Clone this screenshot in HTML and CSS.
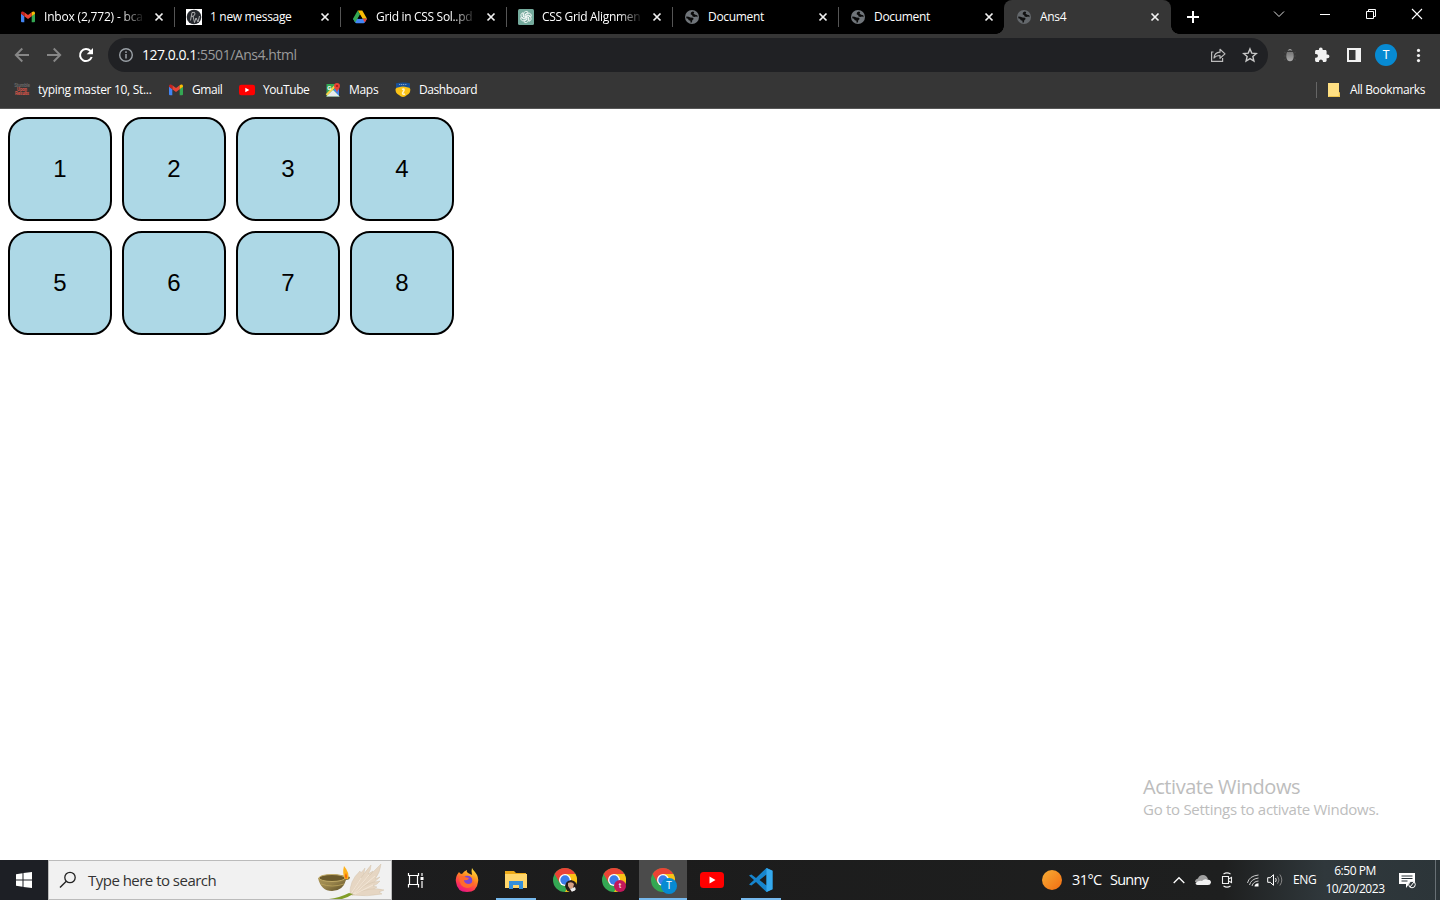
FILE: index.html
```html
<!DOCTYPE html>
<html lang="en">
<head>
<meta charset="utf-8">
<title>Ans4</title>
<link rel="stylesheet" href="styles.css">
</head>
<body>
<svg class="defs" width="0" height="0" aria-hidden="true">
  <defs>
    <linearGradient id="sunFill" x1="0" y1="0" x2="1" y2="1"><stop offset="0" stop-color="#f6ad35"/><stop offset="1" stop-color="#f36d12"/></linearGradient>
    <linearGradient id="foxFill" x1=".8" y1="0" x2=".3" y2="1"><stop offset="0" stop-color="#ffe83d"/><stop offset=".4" stop-color="#ff8a1f"/><stop offset=".75" stop-color="#ff3750"/><stop offset="1" stop-color="#e31587"/></linearGradient>
    <linearGradient id="bowlFill" x1="0" y1="0" x2="1" y2="1"><stop offset="0" stop-color="#b39d5c"/><stop offset=".5" stop-color="#96824a"/><stop offset="1" stop-color="#4f421d"/></linearGradient>
    <linearGradient id="bugFill" x1="0" y1="0" x2="0" y2="1"><stop offset="0" stop-color="#777"/><stop offset="1" stop-color="#aaa"/></linearGradient>
    <symbol id="gmail" viewBox="0 0 16 16"><path fill="#4285f4" d="M1 4.500 4.300 7v6.200H2a1 1 0 0 1-1-1z"/><path fill="#34a853" d="M15 4.500 11.700 7v6.200H14a1 1 0 0 0 1-1z"/><path fill="#ea4335" d="M4.300 3.200 8 6l3.700-2.800V7.200L8 10 4.300 7.200z"/><path fill="#c5221f" d="M1 4.300c0-1.800 1.700-2.300 3.300-1.100v4L1 4.800z"/><path fill="#fbbc04" d="M15 4.300c0-1.800-1.700-2.300-3.300-1.100v4L15 4.800z"/></symbol>
    <symbol id="close" viewBox="0 0 10 10"><path d="M1.500 1.500 8.500 8.500M8.500 1.500 1.500 8.500" fill="none" stroke="#f1f1f1" stroke-width="1.700"/></symbol>
    <symbol id="globe" viewBox="0 0 16 16"><circle cx="8" cy="8" r="7" fill="#70757a"/><path class="land" d="M8.600 2.600 7 3.400 6.600 5.300 8.300 6.200 8.300 7.300 10.200 7.900 12.200 7.600 13.600 8.300 13.300 6.300 11.300 5.800 9.600 4.700 10.200 3zM2.300 7.500 4.500 7.700 6.500 8.400 9 8.800 9.700 10 8.300 11.300 7.900 13.600 6.400 13.500 6.500 11.700 4.800 11.300 3.900 9.800 2.300 9.300z"/></symbol>
    <symbol id="youtube" viewBox="0 0 24 18"><rect x="0" y="1" width="24" height="16" rx="3.500" fill="#f00"/><path d="M9.500 5.500v7l6-3.500z" fill="#fff"/></symbol>
    <symbol id="chrome" viewBox="0 0 24 24"><circle cx="12" cy="12" r="12" fill="#34a853"/><path d="M1.600 6A12 12 0 0 1 22.400 6L12 12z" fill="#ea4335"/><path d="M1.600 6 6.800 15 12 12 12 6z" fill="#ea4335"/><path d="M22.400 6A12 12 0 0 1 12 24L17.200 15 12 6z" fill="#fbc116"/><circle cx="12" cy="12" r="6" fill="#fff"/><circle cx="12" cy="12" r="4.700" fill="#3b7de9"/></symbol>
  </defs>
</svg>

<header class="browser">
  <div class="tabstrip">
    <div class="tab"><svg class="fav"><use href="#gmail"/></svg><span class="tab-title fade w-inbox">Inbox (2,772) - bca</span><svg class="x"><use href="#close"/></svg></div>
    <div class="tab"><svg class="fav" viewBox="0 0 16 16"><rect width="16" height="16" fill="#fff"/><circle cx="8" cy="8" r="7.300" fill="#25282d"/><path d="M4.500 11.500 6 3.500q3.500-1 3 1.500T5.500 7.500M7 7l1.500 6.500L10 9l2 4 1.500-6" fill="none" stroke="#ccc" stroke-width=".8"/></svg><span class="tab-title">1 new message</span><svg class="x"><use href="#close"/></svg></div>
    <div class="tab"><svg class="fav" viewBox="0 0 16 16"><path fill="#fbbc04" d="M5.700 1.500h4.600L15 9.700h-4.400z"/><path fill="#4285f4" d="M1 9.700h14L12.800 13.500q-.4.800-1.300.800H4.500q-.9 0-1.300-.8z"/><path fill="#34a853" d="M5.700 1.500 8 5.500 3.200 13.500 1 9.700z"/><path fill="#ea4335" d="M10.700 9.700H15l-2.200 3.800z"/><path fill="#000" d="m8 6 2.200 3.700H5.800z"/></svg><span class="tab-title fade">Grid in CSS Sol..pd</span><svg class="x"><use href="#close"/></svg></div>
    <div class="tab"><svg class="fav" viewBox="0 0 16 16"><rect width="16" height="16" rx="1.500" fill="#74aa9c"/><g fill="none" stroke="#fff" stroke-width=".8"><path id="petal" d="M5.700 8V4.700a2.500 2.500 0 0 1 4.500-1.300L7.200 5.200v3.400"/><use href="#petal" transform="rotate(60 8 8)"/><use href="#petal" transform="rotate(120 8 8)"/><use href="#petal" transform="rotate(180 8 8)"/><use href="#petal" transform="rotate(240 8 8)"/><use href="#petal" transform="rotate(300 8 8)"/></g></svg><span class="tab-title fade">CSS Grid Alignmen</span><svg class="x"><use href="#close"/></svg></div>
    <div class="tab"><svg class="fav"><use href="#globe"/></svg><span class="tab-title">Document</span><svg class="x"><use href="#close"/></svg></div>
    <div class="tab before-active"><svg class="fav"><use href="#globe"/></svg><span class="tab-title">Document</span><svg class="x"><use href="#close"/></svg></div>
    <div class="tab active"><svg class="fav"><use href="#globe"/></svg><span class="tab-title">Ans4</span><svg class="x"><use href="#close"/></svg></div>
    <svg class="newtab" viewBox="0 0 12 12"><path d="M6 0v12M0 6h12" stroke="#fff" stroke-width="2"/></svg>
    <div class="window-controls">
      <svg viewBox="0 0 12 12"><path d="M1 3.500 6 8.500 11 3.500" fill="none" stroke="#ddd"/></svg>
      <svg viewBox="0 0 12 12"><path d="M1 6.500h10" stroke="#fff"/></svg>
      <svg viewBox="0 0 12 12"><path d="M1.500 3.500h7v7h-7zM3.500 3.500v-2h7v7h-2" fill="none" stroke="#fff"/></svg>
      <svg viewBox="0 0 12 12"><path d="m1 1 10 10M11 1 1 11" stroke="#fff" stroke-width="1.100"/></svg>
    </div>
  </div>

  <div class="toolbar">
    <div class="nav">
      <svg viewBox="0 0 16 16"><path d="M15 8H2M8.300 1.500 1.800 8l6.500 6.500" fill="none" stroke="#878787" stroke-width="1.900"/></svg>
      <svg viewBox="0 0 16 16"><path d="M1 8h13M7.700 1.500 14.200 8l-6.500 6.500" fill="none" stroke="#878787" stroke-width="1.900"/></svg>
      <svg viewBox="0 0 16 16"><path d="M13.700 10A6 6 0 1 1 12.500 4" fill="none" stroke="#fff" stroke-width="2"/><path d="M15 1v6.300H8.700z" fill="#fff"/></svg>
    </div>
    <div class="omnibox">
      <svg class="info" viewBox="0 0 16 16"><circle cx="8" cy="8" r="6.300" fill="none" stroke="#9aa0a6" stroke-width="1.400"/><path d="M8 7v4.500M8 4.300v1.600" stroke="#9aa0a6" stroke-width="1.500"/></svg>
      <span class="url"><b>127.0.0.1</b>:5501/Ans4.html</span>
      <svg class="share" viewBox="0 0 16 16"><path d="M3.500 5H1.600v9.300h11V11" fill="none" stroke="#bbb" stroke-width="1.200"/><path d="M4 11c.3-4 2.500-5.700 6-5.800V2.300L15 6.900l-5 4.400V8.500C7.500 8.500 5.500 9 4 11z" fill="none" stroke="#bbb" stroke-width="1.200" stroke-linejoin="round"/></svg>
      <svg class="star" viewBox="0 0 16 16"><path d="m8 1.900 1.750 4.200 4.600.4-3.500 3 1.050 4.500L8 11.600 4.100 14l1.050-4.500-3.500-3 4.600-.4z" fill="none" stroke="#c9c9c9" stroke-width="1.400"/></svg>
    </div>
    <div class="extensions">
      <svg viewBox="0 0 16 16"><path d="M5.500 3.700Q8 .3 10.500 3.700 8 2.800 5.500 3.700z" fill="#aaa"/><path d="M5 5h6q1 2 .7 5c-.3 2.800-1.700 4.300-3.700 4.300S4.600 12.800 4.300 10Q4 7 5 5z" fill="url(#bugFill)"/><path d="m2 5 2 1M1.800 9H4M2 13l2-1M14 5l-2 1M14.200 9H12M14 13l-2-1" stroke="#444"/></svg>
      <svg viewBox="0 0 16 16"><path d="M13.600 7.500h-1V4.400c0-.8-.6-1.400-1.400-1.400H8.700V2.500a1.900 1.900 0 0 0-3.800 0V3H2.500c-.8 0-1.400.6-1.400 1.400v2.500h.9a1.900 1.900 0 0 1 0 3.900h-.9v2.700c0 .8.600 1.400 1.400 1.400H5v-.8a2 2 0 0 1 3.900 0v.8h2.300c.8 0 1.400-.6 1.400-1.400v-2.300h1a1.850 1.850 0 0 0 0-3.700z" fill="#f2f2f2"/></svg>
      <svg viewBox="0 0 16 16"><path fill-rule="evenodd" d="M1 1h14v14H1zM3 3v10h6.500V3z" fill="#f2f2f2"/></svg>
      <span class="avatar">T</span>
      <svg viewBox="0 0 16 16" fill="#f2f2f2"><circle cx="8.500" cy="3.400" r="1.600"/><circle cx="8.500" cy="8.500" r="1.600"/><circle cx="8.500" cy="13.600" r="1.600"/></svg>
    </div>
  </div>

  <nav class="bookmarks">
    <a class="bm bm-typing"><span class="mini"><i>Stumble</i><em>Upon</em><em>Results</em></span><span>typing master 10, St...</span></a>
    <a class="bm bm-gmail"><svg class="fav"><use href="#gmail"/></svg><span>Gmail</span></a>
    <a class="bm bm-yt"><svg class="fav"><use href="#youtube"/></svg><span>YouTube</span></a>
    <a class="bm bm-maps"><svg class="fav" viewBox="0 0 16 16"><path d="M1.500 2h12.500v12.500H1.500z" fill="#34a853"/><path d="m2 14.500 6-6 6 6z" fill="#e8eaed"/><path d="m8.500 8 3-3 2.500 3v6z" fill="#4285f4"/><path d="m1.500 13 8.500-9" stroke="#fbd34b" stroke-width="2"/><path d="m2 14.500 6-6 6 6" fill="none" stroke="#fff"/><text x="2.200" y="7.500" font-size="6" fill="#fff" class="map-letter">G</text><path d="M12 10.500C11.600 8 9 6.700 9 4a3 3 0 0 1 6 0c0 2.700-2.600 4-3 6.500z" fill="#ea4335"/><circle cx="12" cy="4" r="1.100" fill="#9d2119"/></svg><span>Maps</span></a>
    <a class="bm"><svg class="fav" viewBox="0 0 16 16"><path d="M1 1.200Q8-.4 15 1.200v5H1z" fill="#174f98"/><path d="M4 2.500h8" stroke="#7f9fc8" stroke-width="1.200" stroke-dasharray="1.200 .7"/><path d="M.5 7Q1 5.500 4 5.300 8 3.500 12 5.300q3 .2 3.300 1.700.3 4.500-3.300 6-2 2-4 2t-4-2Q.3 11.500.5 7z" fill="#fbc316"/><path d="M7 7.500Q9.500 6 9 8.500L7.500 11q.5 2 2.500.8" fill="none" stroke="#fff4c7" stroke-width="1.500"/></svg><span>Dashboard</span></a>
    <a class="bm bm-all"><svg class="fav" viewBox="0 0 16 16"><path d="M2 1h11v9.500h1V15H2z" fill="#ffe083"/><path d="M2.500 14.500h9.500M13.300 10.500v4M13.500 11v3.500H11" fill="none" stroke="#edc44d"/></svg><span>All Bookmarks</span></a>
  </nav>
</header>

<main class="page">
  <div class="grid">
    <div class="cell">1</div><div class="cell">2</div><div class="cell">3</div><div class="cell">4</div>
    <div class="cell">5</div><div class="cell">6</div><div class="cell">7</div><div class="cell">8</div>
  </div>
  <aside class="watermark"><p class="wm-title">Activate Windows</p><p class="wm-sub">Go to Settings to activate Windows.</p></aside>
</main>

<footer class="taskbar">
  <div class="start"><svg width="16" height="16" viewBox="0 0 16 16" fill="#fff"><path d="M0 2.200 6.500 1.200v6.300H0zM7.500 1 16 0v7.500H7.500zM0 8.500h6.500v6.300L0 13.800zM7.500 8.500H16V16l-8.500-1z"/></svg></div>
  <div class="search">
    <svg width="18" height="18" viewBox="0 0 18 18"><circle cx="11" cy="6.500" r="5.200" fill="none" stroke="#222" stroke-width="1.300"/><path d="M7.300 10.200 1 16.500" stroke="#222" stroke-width="1.400"/></svg>
    <span class="search-text">Type here to search</span>
    <svg class="lamp" width="74" height="38" viewBox="0 0 74 38">
      <g fill="#e6d6c3" stroke="#d0bda5" stroke-width=".4"><path d="M33 34Q32 20 43 10q0 4 5-3-1 12-14 27z"/><path d="M34 34Q42 17 54 4q0 5-3 9l5-3Q51 24 35 34z"/><path d="M35 34Q49 17 64 3q-1 9-6 15l5-2Q52 27 35 34z"/><path d="M35 34q14-13 28-14-3 4-7 5l4 1q-9 7-25 8z"/><path d="M35 34q18-9 32-5l-5 2 3 2q-15 3-30 1z"/></g>
      <path d="M34 33 44 17M36 33 52 14M37 33 58 15M38 33l18-9" stroke="#f6eadb" stroke-width=".8"/>
      <path d="M12 38q10-1 20-6l4 1q-6 4-11 5z" fill="#809d28"/>
      <path d="M1 17q14-6 28-2l4 1q0 3-4 3-3 11-14 11T1 17z" fill="url(#bowlFill)"/><ellipse cx="15" cy="17" rx="13" ry="3.500" fill="#6b5a2c" stroke="#c0aa67"/><path d="M4 23q11 4 23 0" fill="none" stroke="#bca65d" stroke-width=".8"/><path d="M27 5q6 7 4 13h-3q-3-5-1-13z" fill="#ffb21b"/><path d="M29 12q2 4 0 6-2-3 0-6z" fill="#f46a0b"/>
    </svg>
  </div>
  <div class="task"><svg width="18" height="18" viewBox="0 0 18 18"><path d="M1.500 2v2.500h10V2M1.500 16.500v-3h10v3M2.500 4.500v9M10.500 4.500v9M15 2v3M15 10v7" fill="none" stroke="#fff" stroke-width="1.200"/><path d="M13.500 6h3v3h-3z" fill="#fff"/></svg></div>
  <div class="apps">
    <div class="app"><svg width="24" height="24" viewBox="0 0 24 24"><path d="M4 4q1 2 3 2 2-3 5-4-1 2 1 3l4 2q-1-4 0-7 1 2 3 4 4 5 3 10-1 10-11 10T1 14Q0 9 4 4z" fill="url(#foxFill)"/><circle cx="12.500" cy="12.500" r="4.800" fill="#7946d8"/><path d="M4 9q3-2 6 0l4 1q-1 3-5 2 0 3 4 4 4 0 6-4 0 8-7 8-8-1-8-11z" fill="#ff6a2c"/></svg></div>
    <div class="app running"><svg width="24" height="20" viewBox="0 0 24 20"><path d="M1 1h9l2 2h10v15H1z" fill="#edaa19"/><path d="M1 4h22v14H1z" fill="#ffd66b"/><path d="M5 19v-8h14v8h-4v-4H9v4z" fill="#348fda"/></svg></div>
    <div class="app"><svg width="24" height="24"><use href="#chrome"/></svg><svg class="badge" viewBox="0 0 12 12"><circle cx="6" cy="6" r="6" fill="#251b19"/><path d="M3 3q4-2 6 1l-1 4-3 1-2-3z" fill="#d6a083"/><path d="M5 9l5-2 1 3-4 2z" fill="#eee"/></svg></div>
    <div class="app"><svg width="24" height="24"><use href="#chrome"/></svg><span class="badge pink">t</span></div>
    <div class="app running selected"><svg width="24" height="24"><use href="#chrome"/></svg><span class="badge blue">T</span></div>
    <div class="app"><svg width="24" height="18"><use href="#youtube"/></svg></div>
    <div class="app running"><svg width="24" height="24" viewBox="0 0 24 24"><path d="m17.500 0 6 2.800v18.400l-6 2.800L7 14.100l-4.600 3.500L0 16.400 5 12 0 7.600l2.400-1.200L7 9.900zM17.500 6.500 10.500 12l7 5.500z" fill="#1685ce" fill-rule="evenodd"/><path d="m17.500 0 6 2.800v18.400l-6 2.800z" fill="#35a9ee"/></svg></div>
  </div>
  <div class="tray">
    <svg class="sun" viewBox="0 0 20 20"><circle cx="10" cy="10" r="10" fill="url(#sunFill)"/></svg>
    <span class="temp">31°C</span><span class="sunny">Sunny</span>
    <svg class="chev" viewBox="0 0 12 8"><path d="m.7 7 5.300-5.300L11.300 7" fill="none" stroke="#fff" stroke-width="1.300"/></svg>
    <svg class="cloud" viewBox="0 0 16 12"><path d="M0 8Q0 5 3 4.500 4 1 8 1q3.500 0 5 4l-4 4z" fill="#a0a0a0"/><path d="M2.500 11Q.5 11 .5 9 4 6 7 7q2-2.500 5-1.500Q16 5.500 16 8.500 15.500 11 13 11z" fill="#f2f2f2"/></svg>
    <svg class="meet" viewBox="0 0 12 16"><path d="M1.500 4.500h6v7h-6zM7.500 7l3-1.500v5L7.500 9M2.500 2Q6-.2 9.500 2M2.500 14q3.500 2.200 7 0" fill="none" stroke="#eee" stroke-width="1.100"/></svg>
    <svg class="wifi" viewBox="0 0 14 14"><path d="M1.500 10Q3 3 12.500 2M3.500 12Q5 6 12.500 5M6 13Q7 8.500 12.500 8" fill="none" stroke="#ccc"/><path d="M8.500 13.500q0-3 4-3.200v3.200z" fill="#fff"/></svg>
    <svg class="sound" viewBox="0 0 16 14"><path d="M.7 4.700h2.500l3.300-3v10.600l-3.300-3H.7z" fill="none" stroke="#fff"/><path d="M8.500 5q1.500 2 0 4" fill="none" stroke="#eee"/><path d="M10.500 3.300q3 3.700 0 7.400M12.800 1.500q4 5.500 0 11" fill="none" stroke="#888"/></svg>
    <span class="eng">ENG</span>
    <div class="clock"><span>6:50 PM</span><span>10/20/2023</span></div>
    <svg class="notice" viewBox="0 0 17 17"><path d="M0 1h16v11h-6l-3 4v-4H0z" fill="#fff"/><path d="M2.500 4h11M2.500 6.500h11M2.500 9h6" stroke="#263036"/><circle cx="13" cy="12.500" r="3.300" fill="#30383c" stroke="#fff"/><path d="m11 15 4-5" stroke="#fff"/></svg>
  </div>
</footer>
</body>
</html>
```
FILE: styles.css
```css
* { box-sizing: border-box; }
html, body { height: 100%; }
body { margin: 0; overflow: hidden; display: flex; flex-direction: column; font-family: "Open Sans", "Noto Sans", sans-serif; font-size: 12px; color: #fff; background: #fff; }
svg { display: block; flex: none; }
span { white-space: nowrap; }
.defs { position: absolute; }
.browser { flex: none; height: 109px; background: #363636; border-bottom: 1px solid #575757; }

.tabstrip { height: 34px; background: #000; display: flex; padding-left: 8px; align-items: center; }
.tab { width: 166px; height: 34px; display: flex; align-items: center; padding: 0 10px 0 12px; position: relative; }
.tab::after { content: ""; position: absolute; right: -1px; top: 7px; width: 1px; height: 20px; background: #555; }
.tab.before-active::after, .tab.active::after { display: none; }
.tab.active { width: 167px; padding-right: 11px; background: #363636; border-radius: 8px 8px 0 0; }
.tab.active::before { content: ""; position: absolute; left: -8px; right: -8px; bottom: 0; height: 8px; background: radial-gradient(circle at 0 0, transparent 7.5px, #363636 8px) left / 8px 8px no-repeat, radial-gradient(circle at 100% 0, transparent 7.5px, #363636 8px) right / 8px 8px no-repeat; }
.fav { width: 16px; height: 16px; }
.land { fill: #080808; }
.active .land { fill: #363636; }
.active .fav { opacity: .8; }
.tab-title { margin-left: 8px; width: 98px; overflow: hidden; line-height: 20px; letter-spacing: -.32px; }
.w-inbox { letter-spacing: -.18px; }
.fade { -webkit-mask-image: linear-gradient(90deg, #000 76px, transparent 101px); mask-image: linear-gradient(90deg, #000 76px, transparent 101px); }
.x { width: 10px; height: 10px; margin-left: auto; }
.newtab { width: 12px; height: 12px; margin-left: 16px; }
.window-controls { display: flex; margin-left: auto; gap: 34px; padding-right: 17px; align-self: flex-start; padding-top: 8px; }
.window-controls svg { width: 12px; height: 12px; }

.toolbar { height: 38px; display: flex; align-items: center; padding-top: 4px; }
.nav { width: 108px; padding-left: 14px; display: flex; gap: 16px; }
.nav svg { width: 16px; height: 16px; }
.omnibox { width: 1160px; height: 34px; border-radius: 17px; background: #202124; display: flex; align-items: center; padding: 0 10px; }
.info { width: 16px; height: 16px; }
.url { margin-left: 8px; font-size: 14px; letter-spacing: -.47px; line-height: 18px; padding-bottom: 1px; color: #9a9a9a; }
.url b { font-weight: 400; color: #fff; }
.share { width: 16px; height: 16px; margin-left: auto; }
.star { width: 16px; height: 16px; margin-left: 16px; }
.extensions { display: flex; align-items: center; padding-left: 14px; gap: 16px; }
.extensions svg { width: 16px; height: 16px; }
.avatar { width: 22px; height: 22px; margin: 0 -3px; border-radius: 50%; background: #078ad2; text-align: center; line-height: 22px; font-family: Roboto, sans-serif; font-size: 12px; }

.bookmarks { height: 36px; display: flex; align-items: center; padding-left: 14px; }
.bm { display: flex; align-items: center; gap: 8px; line-height: 20px; letter-spacing: -.42px; }
.bm-typing { width: 154px; letter-spacing: -.3px; }
.bm-gmail { width: 71px; }
.bm-yt { width: 86px; }
.bm-maps { width: 70px; letter-spacing: -.3px; }
.bm-all { margin-left: auto; width: 124px; padding-left: 9px; border-left: 1px solid #666; height: 16px; letter-spacing: -.38px; }
.mini { width: 16px; font: bold 4.500px/4px Roboto, sans-serif; color: #d8574a; display: flex; flex-direction: column; align-items: center; letter-spacing: -.2px; }
.mini i { font-style: normal; color: #666; }
.mini em { font-style: normal; }
.map-letter { font-family: Roboto, sans-serif; font-weight: bold; }

.page { flex: 1; padding: 8px; position: relative; color: #000; }
.grid { display: grid; grid-template-columns: repeat(4, 104px); gap: 10px; }
.cell { height: 104px; border: 2px solid #000; border-radius: 20px; background: #add8e6; display: flex; align-items: center; justify-content: center; font: 24px "Liberation Sans", Arial, sans-serif; }
.watermark { position: absolute; left: 1143px; top: 664px; color: #bdbdbd; white-space: nowrap; }
.watermark p { margin: 0; }
.wm-title { font-size: 20px; line-height: 27px; letter-spacing: -.44px; }
.wm-sub { font-size: 15px; line-height: 19px; letter-spacing: -.28px; }

.taskbar { height: 40px; flex: none; display: flex; background: linear-gradient(90deg, #1d1e21, #1c1c1c 45%, #1e1f1f 85%, #30383c 92%, #2c3539); }
.start { width: 48px; display: flex; align-items: center; justify-content: center; background: #1d1f25; }
.search { width: 344px; background: #f1f1f1; border: 1px solid #bbb; display: flex; align-items: center; padding-left: 10px; color: #333; }
.search-text { margin-left: 11px; font-size: 15px; letter-spacing: -.52px; }
.lamp { margin-left: auto; }
.task { width: 48px; display: flex; align-items: center; justify-content: center; margin-right: 3px; }
.apps { display: flex; gap: 1px; }
.app { width: 48px; display: flex; align-items: center; justify-content: center; position: relative; }
.running::after { content: ""; position: absolute; left: 4px; right: 4px; bottom: 0; height: 2px; background: #76b9ed; }
.selected { background: #4b4b4b; }
.selected::after { left: 0; right: 0; }
.badge { position: absolute; left: 24px; top: 20px; width: 12px; height: 12px; border-radius: 50%; text-align: center; font: 8px/12px Roboto, sans-serif; }
.pink { background: #c2185b; }
.blue { left: 22px; top: 18px; width: 16px; height: 16px; line-height: 16px; font-size: 10px; background: #078ad2; }
.tray { margin-left: auto; width: 398px; display: flex; align-items: center; position: relative; }
.tray::after { content: ""; position: absolute; right: 4px; top: 0; bottom: 0; width: 1px; background: #687075; }
.sun { width: 20px; height: 20px; }
.temp, .sunny { font-size: 14.500px; line-height: 18px; padding-bottom: 1px; letter-spacing: -.75px; }
.temp { width: 38px; margin-left: 10px; letter-spacing: -.6px; }
.sunny { width: 63px; }
.chev { width: 12px; height: 8px; }
.cloud { width: 16px; height: 12px; margin-left: 10px; }
.meet { width: 12px; height: 16px; margin-left: 10px; }
.wifi { width: 14px; height: 14px; margin-left: 13px; }
.sound { width: 16px; height: 14px; margin-left: 7px; }
.eng { width: 24px; margin-left: 10px; letter-spacing: -.35px; line-height: 16px; padding-bottom: 1px; }
.clock { width: 60px; margin-left: 8px; display: flex; flex-direction: column; align-items: center; line-height: 18px; letter-spacing: -.46px; }
.notice { width: 17px; height: 17px; margin-left: 14px; }
```
